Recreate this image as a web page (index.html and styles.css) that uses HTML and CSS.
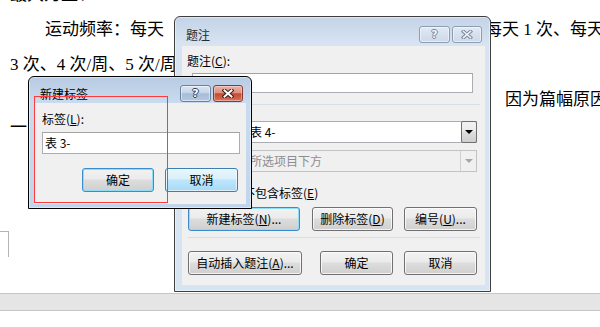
FILE: index.html
```html
<!DOCTYPE html>
<html lang="zh-CN">
<head>
<meta charset="utf-8">
<title>题注</title>
<link rel="stylesheet" href="styles.css">
</head>
<body>
<div class="doc">
  <div class="line l1">最大力量、</div>
  <div class="line l2"><span class="l2a">运动频率：每天</span><span>每天 1 次、每天</span></div>
  <div class="line l3">3 次、4 次/周、5 次/周、</div>
  <div class="line l4">因为篇幅原因</div>
  <div class="line l5">一</div>
  <div class="corner"></div>
  <div class="statusbar"></div>
</div>

<div class="win inactive main-dlg">
  <div class="titlebar">
    <span class="title">题注</span>
    <span class="caps">
      <span class="capbtn help"><span class="q">?</span></span>
      <span class="capbtn close"><svg width="12" height="9" viewBox="0 0 12 9"><path class="xo" d="M2.5 1.5L9.5 7.5M9.5 1.5L2.5 7.5"/><path class="xi" d="M2.5 1.5L9.5 7.5M9.5 1.5L2.5 7.5"/></svg></span>
    </span>
  </div>
  <div class="client main-client">
    <div class="lbl cap-lbl">题注(<u>C</u>):</div>
    <div class="textbox cap-input">表 4- 1</div>
    <div class="opt-row"><span>选项</span><span class="hline"></span></div>
    <div class="combo-row r1">
      <span class="rlbl">标签(<u>L</u>):</span>
      <div class="combo"><span class="ctext">表 4-</span><span class="dropbtn"><span class="arrow"></span></span></div>
    </div>
    <div class="combo-row r2">
      <span class="rlbl">位置(<u>P</u>):</span>
      <div class="combo disabled"><span class="ctext">所选项目下方</span><span class="dropbtn"><span class="arrow"></span></span></div>
    </div>
    <div class="chk-row"><span class="chk"></span><span>题注中不包含标签(<u>E</u>)</span></div>
    <div class="btn-row row1">
      <span class="btn default b-new">新建标签(<u>N</u>)...</span>
      <span class="btn b-del">删除标签(<u>D</u>)</span>
      <span class="btn b-num">编号(<u>U</u>)...</span>
    </div>
    <div class="sep"></div>
    <div class="btn-row row2">
      <span class="btn b-auto">自动插入题注(<u>A</u>)...</span>
      <span class="btn b-ok">确定</span>
      <span class="btn b-cancel">取消</span>
    </div>
  </div>
</div>

<div class="win active small-dlg">
  <div class="titlebar">
    <span class="title">新建标签</span>
    <span class="caps">
      <span class="capbtn help"><span class="q">?</span></span>
      <span class="capbtn close"><svg width="12" height="9" viewBox="0 0 12 9"><path class="xo" d="M2.5 1.5L9.5 7.5M9.5 1.5L2.5 7.5"/><path class="xi" d="M2.5 1.5L9.5 7.5M9.5 1.5L2.5 7.5"/></svg></span>
    </span>
  </div>
  <div class="client small-client">
    <div class="lbl s-lbl">标签(<u>L</u>):</div>
    <div class="textbox s-input">表 3-</div>
    <div class="btn-row s-row">
      <span class="btn default s-ok">确定</span>
      <span class="btn hover s-cancel">取消</span>
    </div>
  </div>
</div>

<div class="redbox"></div>
</body>
</html>
```

FILE: styles.css
```css
html, body {
  margin: 0;
  padding: 0;
}
body {
  width: 600px;
  height: 327px;
  overflow: hidden;
  background: #fff;
  position: relative;
}

/* ---------- document behind ---------- */
.doc {
  font-family: "Liberation Serif", "Noto Sans CJK SC", serif;
  font-size: 17px;
  color: #000;
}
.line {
  height: 35px;
  line-height: 35px;
  white-space: nowrap;
}
.l1 { margin-top: -23px; padding-left: 10px; }
.l2 { display: flex; }
.l2a { width: 440px; padding-left: 45px; flex: none; }
.l3 { padding-left: 10px; }
.l4 { padding-left: 505px; }
.l5 { height: 22px; line-height: 22px; padding-left: 10px; }
.corner {
  margin-top: 92px;
  width: 9px;
  height: 26px;
  box-sizing: border-box;
  border-top: 1px solid #b4b4b4;
  border-right: 1px solid #b4b4b4;
}
.statusbar {
  margin-top: 36px;
  height: 18px;
  box-sizing: border-box;
  background: #e5e5e5;
  border-top: 1px solid #c6c6c6;
  border-bottom: 1px solid #c6c6c6;
}

/* ---------- windows ---------- */
.win {
  position: absolute;
  box-sizing: border-box;
  display: flex;
  flex-direction: column;
  border-radius: 6px 6px 0 0;
  font-family: "Noto Sans CJK SC", "Noto Sans", sans-serif;
  font-size: 12px;
  color: #000;
}
.win.inactive {
  border: 1px solid #3f3f3f;
  background: linear-gradient(#c3d3e6 0, #d8e4f2 28px, #d7e4f2 100%);
  box-shadow: inset 0 0 0 1px rgba(255,255,255,0.45);
}
.win.active {
  border: 1px solid #000;
  background: linear-gradient(#b7cbe4 0, #cadbee 26px, #c0d5ec 100%);
  box-shadow: inset 0 0 0 1px rgba(255,255,255,0.45);
}
.main-dlg {
  left: 174px;
  top: 16px;
  width: 317px;
  height: 276px;
  padding: 0 5px 6px 7px;
}
.small-dlg {
  left: 28px;
  top: 76px;
  width: 224px;
  height: 133px;
  padding: 0 5px 4px 5px;
}
.titlebar {
  display: flex;
  align-items: center;
  justify-content: space-between;
  flex: none;
  box-sizing: border-box;
}
.main-dlg .titlebar { height: 29px; padding: 9px 3px 3px 4px; }
.small-dlg .titlebar { height: 26px; padding: 8px 3px 1px 6px; }
.title {
  line-height: 16px;
}
.main-dlg .title { color: #2a2a2a; }
.caps {
  display: flex;
  gap: 2px;
}
.capbtn {
  height: 17px;
  box-sizing: border-box;
  border-radius: 3px;
  display: flex;
  align-items: center;
  justify-content: center;
}
.capbtn.help { width: 31px; }
.capbtn.close { width: 30px; }
.q {
  font-family: "DejaVu Sans", sans-serif;
  font-weight: bold;
  font-size: 11px;
  line-height: 11px;
}
.xo { fill: none; stroke-width: 4; stroke-linecap: square; }
.xi { fill: none; stroke-width: 2; stroke-linecap: square; }

.active .capbtn.help {
  border: 1px solid #6c819e;
  background: linear-gradient(#dae5f2, #c5d5e8 45%, #a6bcd7 52%, #b5c9e0);
  box-shadow: inset 0 0 0 1px rgba(255,255,255,0.5);
}
.active .capbtn.close {
  border: 1px solid #8a3a2c;
  background: linear-gradient(#ebb2a6, #dc9181 45%, #c64a33 52%, #d1644e 85%, #dc8370);
  box-shadow: inset 0 0 0 1px rgba(255,255,255,0.35);
}
.active .q {
  color: #fff;
  text-shadow: 1px 0 #2f3d52, -1px 0 #2f3d52, 0 1px #2f3d52, 0 -1px #2f3d52;
}
.active .xo { stroke: #3a1d18; }
.active .xi { stroke: #fff; }

.inactive .capbtn {
  border: 1px solid #8e9eb2;
  background: linear-gradient(#e2eaf4, #d6e1ee 50%, #ccd9e8);
  box-shadow: inset 0 0 0 1px rgba(255,255,255,0.5);
}
.inactive .q {
  color: #eef3f8;
  text-shadow: 1px 0 #7b899b, -1px 0 #7b899b, 0 1px #7b899b, 0 -1px #7b899b;
}
.inactive .xo { stroke: #7b899b; stroke-width: 3.6; }
.inactive .xi { stroke: #eef3f8; stroke-width: 1.6; }

.client {
  flex: 1;
  background: #f0f0f0;
  display: flex;
  flex-direction: column;
  position: relative;
}
.lbl {
  height: 16px;
  line-height: 16px;
  white-space: nowrap;
}
.textbox {
  box-sizing: border-box;
  background: #fff;
  border: 1px solid #abadb3;
  border-top-color: #a3a3a3;
  padding-left: 2px;
  white-space: nowrap;
}

/* main client */
.cap-lbl { margin: 7px 0 0 5px; }
.cap-input {
  margin: 4px 0 0 10px;
  width: 281px;
  height: 20px;
  line-height: 18px;
}
.opt-row {
  margin: 3px 5px 0 4px;
  height: 16px;
  line-height: 16px;
  display: flex;
  align-items: center;
  gap: 4px;
}
.hline {
  flex: 1;
  height: 1px;
  background: #d5dfe5;
}
.combo-row {
  display: flex;
  align-items: center;
  height: 22px;
  margin-left: 4px;
}
.combo-row.r1 { margin-top: 9px; }
.combo-row.r2 { margin-top: 7px; }
.rlbl { width: 60px; flex: none; line-height: 16px; }
.combo {
  width: 231px;
  height: 22px;
  box-sizing: border-box;
  border: 1px solid #abadb3;
  background: #fff;
  display: flex;
  align-items: stretch;
}
.ctext {
  flex: 1;
  padding-left: 3px;
  line-height: 20px;
  white-space: nowrap;
}
.dropbtn {
  width: 16px;
  margin: -1px -1px -1px 0;
  box-sizing: border-box;
  border: 1px solid #707070;
  border-radius: 2px;
  background: linear-gradient(#f2f2f2, #ebebeb 45%, #dddddd 50%, #cfcfcf);
  display: flex;
  align-items: center;
  justify-content: center;
}
.arrow {
  width: 0;
  height: 0;
  border-left: 4px solid transparent;
  border-right: 4px solid transparent;
  border-top: 4px solid #000;
}
.combo.disabled {
  background: #f0f0f0;
  border-color: #c3c3c3;
}
.combo.disabled .ctext { color: #8d8d8d; }
.combo.disabled .dropbtn {
  margin: 0;
  border: none;
  border-left: 1px solid #d0d0d0;
  border-radius: 0;
  background: transparent;
}
.combo.disabled .arrow { border-top-color: #a6a6a6; }

.chk-row {
  margin: 13px 0 0 6px;
  height: 16px;
  line-height: 16px;
  display: flex;
  align-items: center;
  gap: 6px;
  white-space: nowrap;
}
.chk {
  width: 13px;
  height: 13px;
  box-sizing: border-box;
  border: 1px solid #8e8f8f;
  background: linear-gradient(135deg, #dcdcdc, #fff);
}

.btn-row {
  display: flex;
  height: 24px;
}
.row1 { margin: 6px 0 0 6px; }
.row2 { margin: 13px 0 0 6px; }
.sep {
  margin: 6px 5px 0 6px;
  height: 1px;
  background: #d5dfe5;
}
.btn {
  box-sizing: border-box;
  height: 24px;
  border: 1px solid #707070;
  border-radius: 3px;
  background: linear-gradient(#f2f2f2, #ebebeb 45%, #dddddd 50%, #cfcfcf);
  box-shadow: inset 0 0 0 1px rgba(255,255,255,0.75);
  display: flex;
  align-items: center;
  justify-content: center;
  white-space: nowrap;
  line-height: 16px;
}
.btn.default {
  border-color: #3a8ccc;
  box-shadow: inset 0 0 0 1px #8fdcf8;
}
.btn.hover {
  border-color: #3c7fb1;
  background: linear-gradient(#eaf6fd, #d9f0fc 45%, #bee6fd 50%, #a7d9f5);
  box-shadow: inset 0 0 0 1px rgba(255,255,255,0.6);
}
.b-new { width: 112px; }
.b-del { width: 81px; margin-left: 12px; }
.b-num { width: 73px; margin-left: 11px; }
.b-auto { width: 114px; }
.b-ok { width: 73px; margin-left: 18px; }
.b-cancel { width: 73px; margin-left: 11px; }

/* small client */
.s-lbl { margin: 8px 0 0 8px; }
.s-input {
  margin: 5px 0 0 8px;
  width: 198px;
  height: 22px;
  line-height: 20px;
}
.s-row { margin: 14px 0 0 48px; }
.s-ok { width: 72px; }
.s-cancel { width: 73px; margin-left: 11px; }

/* annotation */
.redbox {
  position: absolute;
  left: 34px;
  top: 96px;
  width: 134px;
  height: 107px;
  box-sizing: border-box;
  border: 1px solid #ff3a3a;
}
```
